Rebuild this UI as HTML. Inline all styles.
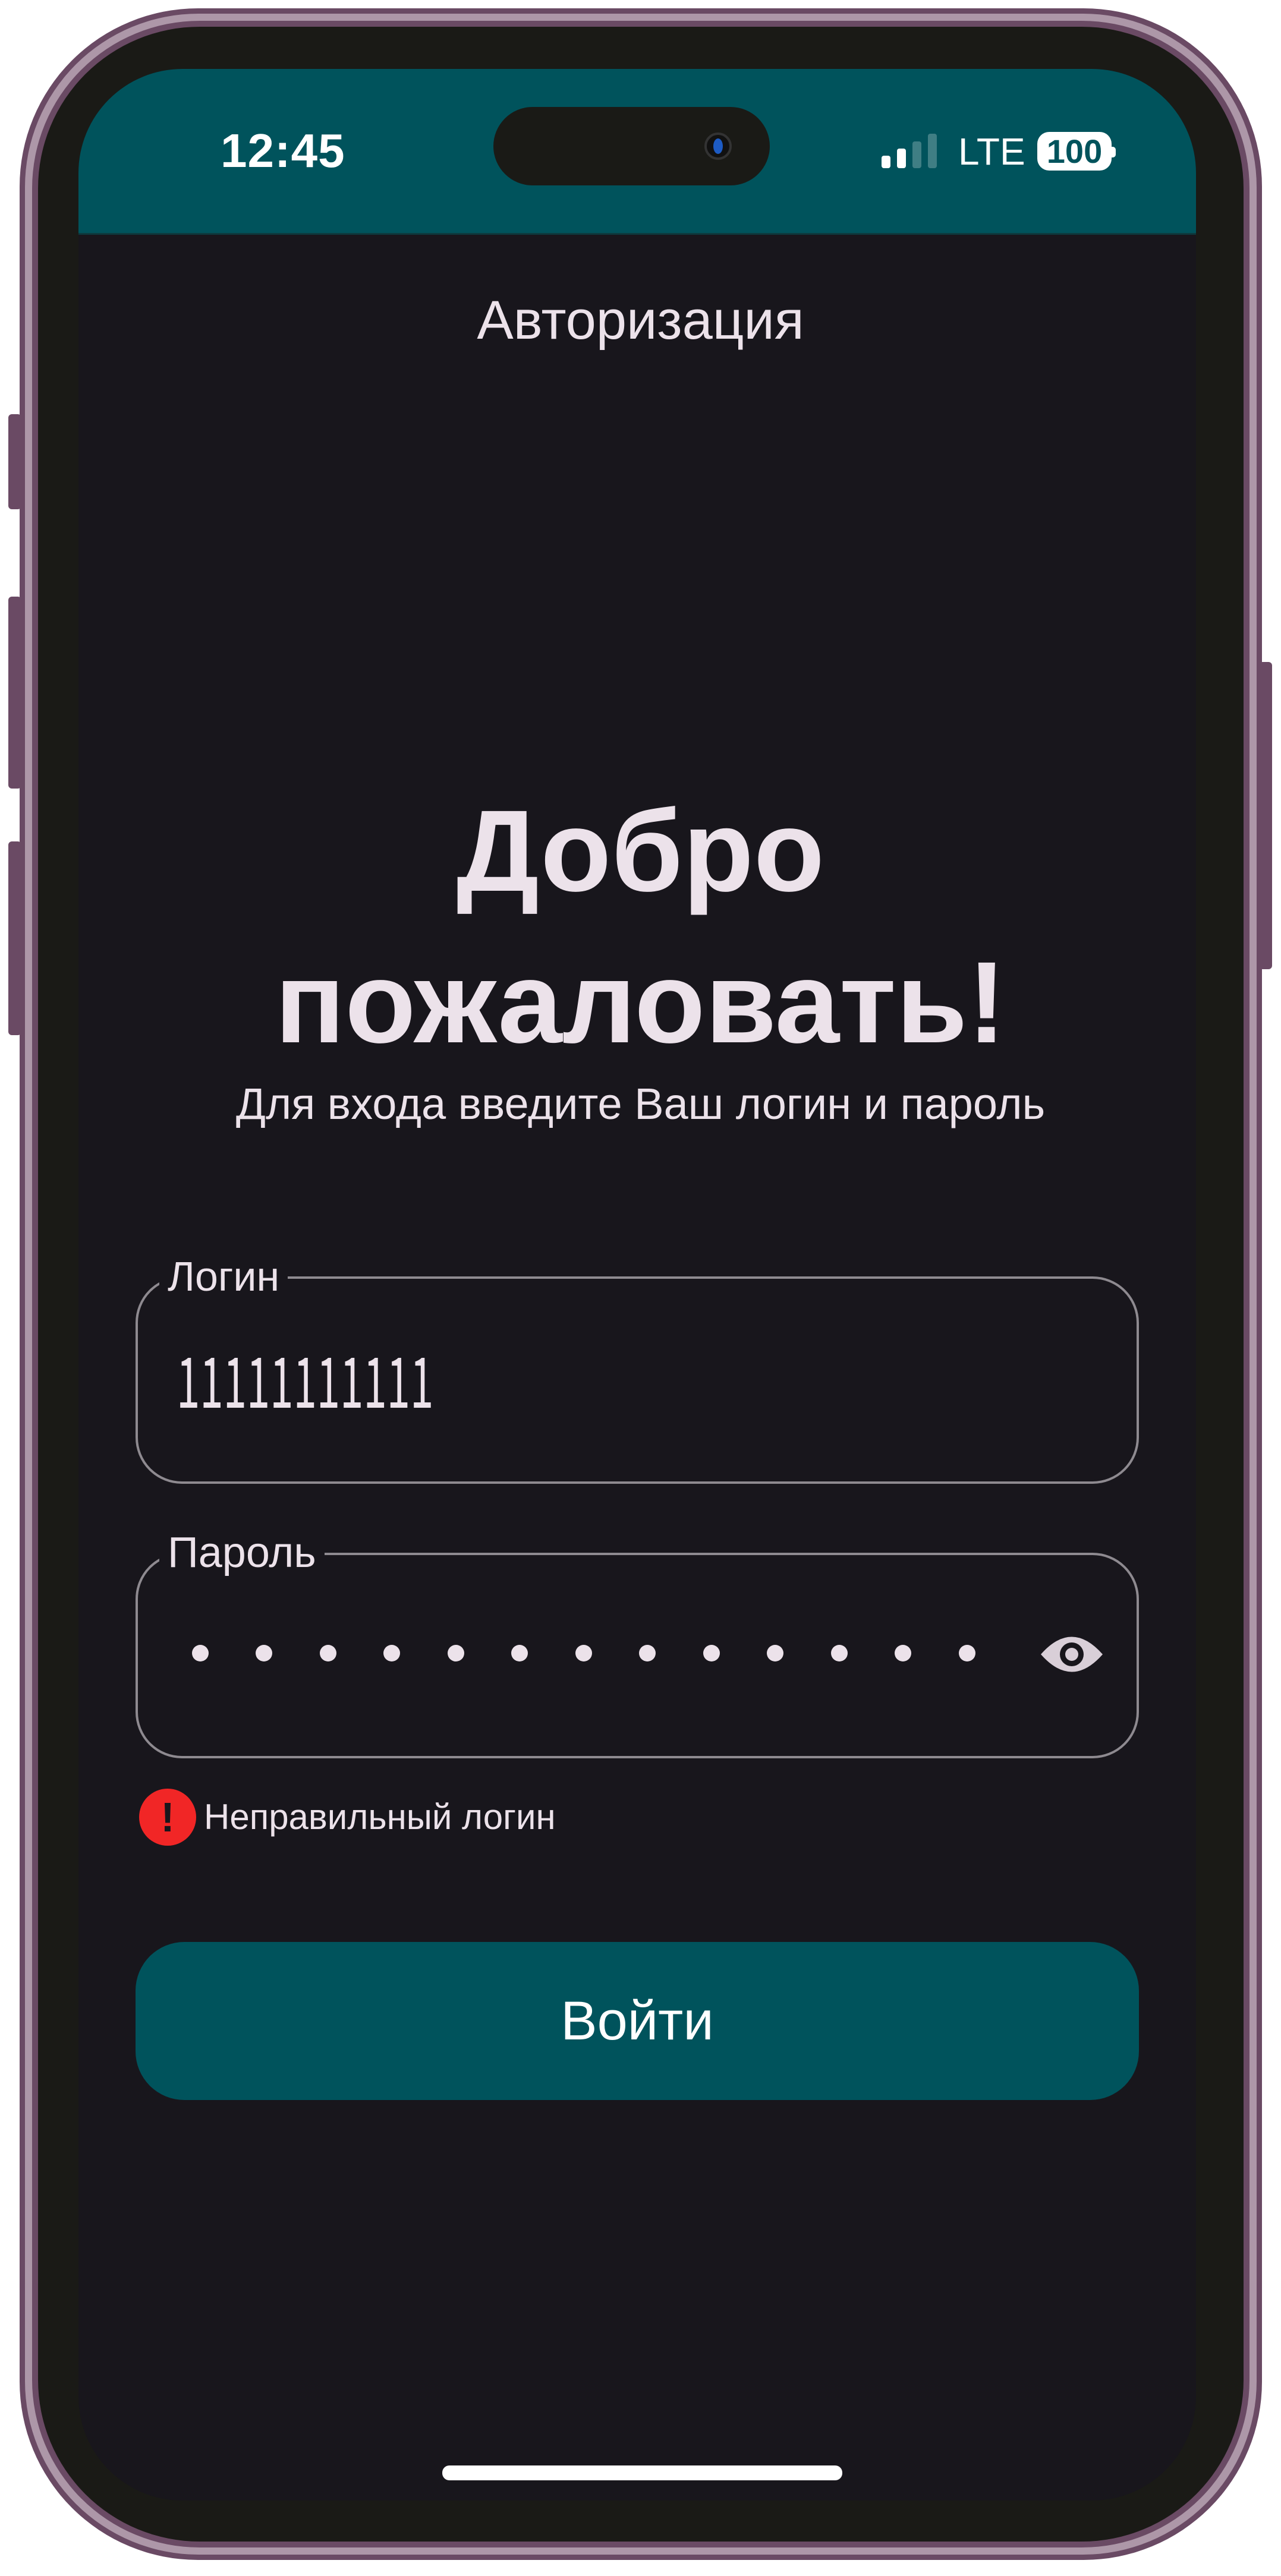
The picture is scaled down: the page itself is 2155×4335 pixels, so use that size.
<!DOCTYPE html>
<html><head><meta charset="utf-8"><style>
*{margin:0;padding:0;box-sizing:border-box}
body{width:2155px;height:4335px;background:#fff;position:relative;overflow:hidden;font-family:"Liberation Sans",sans-serif}
.a{position:absolute}
.txt{color:#ece2ea}
</style></head><body>
<!-- side buttons -->
<div class="a" style="left:14px;top:697px;width:22px;height:160px;background:#6a4a64;border-radius:6px"></div>
<div class="a" style="left:14px;top:1004px;width:22px;height:323px;background:#6a4a64;border-radius:6px"></div>
<div class="a" style="left:14px;top:1416px;width:22px;height:326px;background:#6a4a64;border-radius:6px"></div>
<div class="a" style="left:2118px;top:1114px;width:22px;height:517px;background:#6a4a64;border-radius:6px"></div>
<!-- frame -->
<div class="a" style="left:33px;top:14px;width:2090px;height:4294px;border-radius:300px;background:#6a4a64"></div>
<div class="a" style="left:42px;top:23px;width:2072px;height:4276px;border-radius:292px;background:#ad97a8"></div>
<div class="a" style="left:54px;top:35px;width:2048px;height:4252px;border-radius:282px;background:#6a4a64"></div>
<div class="a" style="left:64px;top:45px;width:2028px;height:4232px;border-radius:272px;background:#1a1a16"></div>
<!-- screen -->
<div class="a" style="left:132px;top:116px;width:1880px;height:4092px;border-radius:175px;background:#18161c;overflow:hidden">
  <div class="a" style="left:0;top:0;width:1880px;height:279px;background:#00535c;border-bottom:3px solid #0d3a3e"></div>
</div>
<!-- dynamic island -->
<div class="a" style="left:830px;top:180px;width:465px;height:132px;border-radius:66px;background:#1a1a16"></div>
<div class="a" style="left:1185px;top:223px;width:46px;height:46px;border-radius:50%;background:#111;border:4px solid #333"></div>
<div class="a" style="left:1200px;top:233px;width:16px;height:26px;border-radius:50%;background:#1d5bc4"></div>
<!-- status -->
<div class="a" style="left:371px;top:209px;font-size:80px;line-height:90px;font-weight:bold;color:#fff;letter-spacing:1px">12:45</div>
<div class="a" style="left:1483px;top:262px;width:15px;height:21px;border-radius:4px;background:#fff"></div>
<div class="a" style="left:1509px;top:250px;width:15px;height:33px;border-radius:4px;background:#fff"></div>
<div class="a" style="left:1535px;top:238px;width:15px;height:45px;border-radius:4px;background:#3f7e84"></div>
<div class="a" style="left:1561px;top:225px;width:15px;height:58px;border-radius:4px;background:#3f7e84"></div>
<div class="a" style="left:1612px;top:220px;font-size:64px;color:#fff;line-height:70px">LTE</div>
<div class="a" style="left:1745px;top:222px;width:125px;height:65px;border-radius:20px;background:#fff;color:#00535c;font-weight:bold;font-size:56px;line-height:65px;text-align:center">100</div>
<div class="a" style="left:1870px;top:247px;width:7px;height:18px;border-radius:0 5px 5px 0;background:#fff"></div>
<!-- title -->
<div class="a txt" style="left:0;width:2155px;top:489px;text-align:center;font-size:92px;line-height:100px">Авторизация</div>
<div class="a txt" style="left:0;width:2155px;top:1327px;text-align:center;font-size:195px;font-weight:bold;line-height:210px">Добро</div>
<div class="a txt" style="left:0;width:2155px;top:1582px;text-align:center;font-size:195px;font-weight:bold;line-height:210px">пожаловать!</div>
<div class="a txt" style="left:0;width:2155px;top:1818px;text-align:center;font-size:74px;line-height:80px">Для входа введите Ваш логин и пароль</div>
<!-- login -->
<div class="a" style="left:228px;top:2148px;width:1688px;height:349px;border:4px solid #8e8a90;border-radius:78px"></div>
<div class="a txt" style="left:268px;top:2112px;padding:0 14px;background:#18161c;font-size:70px;line-height:72px">Логин</div>
<div class="a txt" style="left:297px;top:2248px;font-family:'Noto Sans CJK SC',sans-serif;font-size:118px;line-height:140px;transform:scaleX(0.6);transform-origin:0 0;white-space:nowrap">11111111111</div>
<!-- password -->
<div class="a" style="left:228px;top:2613px;width:1688px;height:346px;border:4px solid #8e8a90;border-radius:78px"></div>
<div class="a txt" style="left:268px;top:2577px;padding:0 14px;background:#18161c;font-size:72px;line-height:72px">Пароль</div>
<svg class="a" style="left:300px;top:2755px" width="1380" height="56">
<g fill="#ece2ea">
<circle cx="37" cy="27" r="14"/><circle cx="144" cy="27" r="14"/><circle cx="252" cy="27" r="14"/><circle cx="359" cy="27" r="14"/><circle cx="467" cy="27" r="14"/><circle cx="574" cy="27" r="14"/><circle cx="682" cy="27" r="14"/><circle cx="789" cy="27" r="14"/><circle cx="897" cy="27" r="14"/><circle cx="1004" cy="27" r="14"/><circle cx="1112" cy="27" r="14"/><circle cx="1219" cy="27" r="14"/><circle cx="1327" cy="27" r="14"/>
</g></svg>
<svg class="a" style="left:1748px;top:2743px" width="110" height="82" viewBox="0 0 110 82">
<path d="M3 41 Q55 -18 107 41 Q55 100 3 41Z" fill="#d9cfd8"/>
<circle cx="55" cy="41" r="20" fill="#18161c"/><circle cx="55" cy="41" r="11" fill="#d9cfd8"/>
</svg>
<!-- error -->
<div class="a" style="left:234px;top:3010px;width:96px;height:96px;border-radius:50%;background:#f12626;color:#18161c;font-weight:bold;font-size:70px;line-height:96px;text-align:center">!</div>
<div class="a txt" style="left:343px;top:3023px;font-size:60px;line-height:70px">Неправильный логин</div>
<!-- button -->
<div class="a" style="left:228px;top:3268px;width:1688px;height:266px;border-radius:82px;background:#00535c;color:#fff;font-size:92px;line-height:266px;text-align:center">Войти</div>
<!-- home indicator -->
<div class="a" style="left:744px;top:4149px;width:673px;height:25px;border-radius:12px;background:#fff"></div>
</body></html>
